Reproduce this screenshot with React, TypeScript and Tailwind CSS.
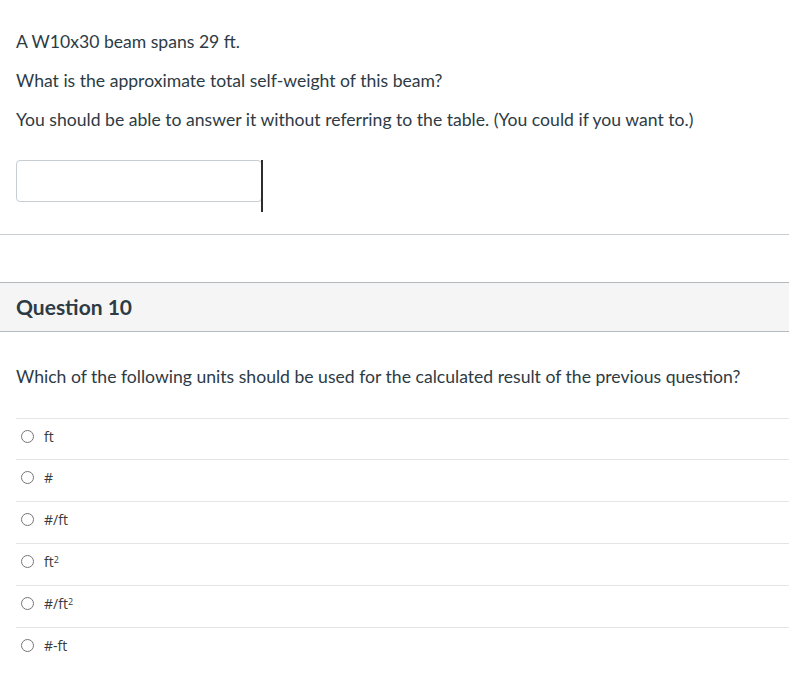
const OPTIONS: { id: string; label: React.ReactNode }[] = [
  { id: "a", label: "ft" },
  { id: "b", label: "#" },
  { id: "c", label: "#/ft" },
  { id: "d", label: <>ft<sup className="text-[9px]">2</sup></> },
  { id: "e", label: <>#/ft<sup className="text-[9px]">2</sup></> },
  { id: "f", label: "#-ft" },
];

export default function App() {
  return (
    <div className="w-[789px] min-h-[676px] bg-white text-[#2d3b45] font-['Lato',sans-serif] overflow-hidden">
      {/* previous question body */}
      <div className="px-4 pt-[30px]">
        <p className="text-[17.6px] leading-6 mb-[15px]">A W10x30 beam spans 29 ft.</p>
        <p className="text-[17.6px] leading-6 mb-[15px]">What is the approximate total self-weight of this beam?</p>
        <p className="text-[17.6px] leading-6">
          You should be able to answer it without referring to the table. (You could if you want to.)
        </p>
        <div className="relative mt-[28px] w-[246px]">
          <input
            type="text"
            className="block w-[246px] h-[42px] border border-[#c7cdd1] rounded-[4px] bg-white outline-none"
          />
          <div className="absolute left-[245px] top-0 w-[2px] h-[52px] bg-[#2d2d2d]" />
        </div>
      </div>

      <div className="mt-[32px] border-t border-[#c7cdd1]" />

      {/* question 10 */}
      <div className="mt-[47px] h-[50px] bg-[#f5f5f5] border-y border-[#b4b9bd] flex items-center px-4">
        <h2 className="text-[21px] font-bold text-[#2d3b45]">Question 10</h2>
      </div>

      <div className="pl-4">
        <p className="text-[17.6px] leading-6 mt-[33px]">
          Which of the following units should be used for the calculated result of the previous question?
        </p>
        <ul className="mt-[29px]">
          {OPTIONS.map((o, i) => (
            <li
              key={o.id}
              className={`flex items-center gap-[10px] pl-[5px] pb-[6px] border-t border-[#e2e4e6] ${
                i === 0 ? "h-[41px]" : "h-[42px]"
              }`}
            >
              <span className="w-[13px] h-[13px] rounded-full border border-[#767676] bg-white shrink-0" />
              <span className="text-[14px] text-[#3a3a3a] font-['Open_Sans',sans-serif]">{o.label}</span>
            </li>
          ))}
        </ul>
      </div>
    </div>
  );
}
